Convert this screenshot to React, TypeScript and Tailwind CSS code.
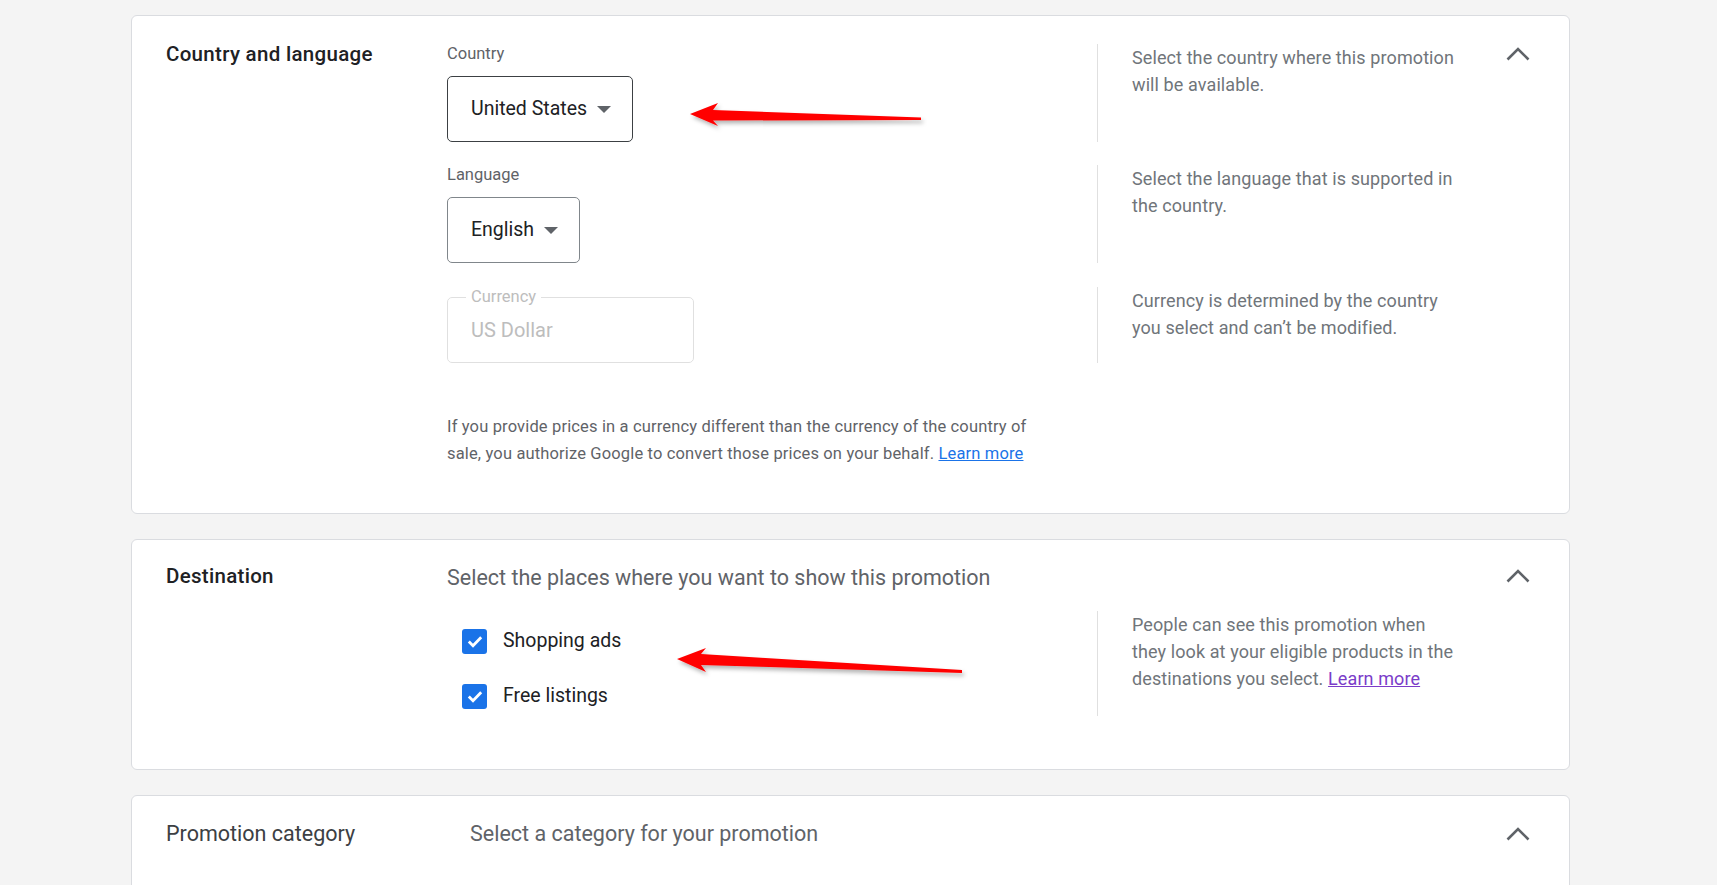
import React from 'react';

const font = { fontFamily: 'Roboto, "Liberation Sans", Arial, sans-serif' };

const ChevronUp = () => (
  <div className="h-[20px] flex items-center">
    <svg width="24" height="14" viewBox="0 0 24 14" fill="none">
      <path d="M1.5 12.5L12 2l10.5 10.5" stroke="#5f6368" strokeWidth="2.6" />
    </svg>
  </div>
);

const Caret = () => (
  <svg width="14" height="7" viewBox="0 0 14 7" className="shrink-0">
    <path d="M0 0h14L7 7z" fill="#5f6368" />
  </svg>
);

const Checkbox = ({ label }: { label: string }) => (
  <label className="flex items-center h-[40px] gap-[16px] cursor-pointer">
    <span className="w-[25px] h-[25px] rounded-[3px] bg-[#1a73e8] flex items-center justify-center">
      <svg width="16" height="13" viewBox="0 0 16 13" fill="none">
        <path d="M1.8 6.6l4.2 4.2L14.2 2.2" stroke="#fff" strokeWidth="2.8" />
      </svg>
    </span>
    <span className="text-[19.5px] text-[#202124]">{label}</span>
  </label>
);

const Help = ({ children }: { children: React.ReactNode }) => (
  <div className="border-l border-[#e0e0e0] pl-[34px] pb-[3px]">
    <p className="w-[330px] text-[18px] leading-[27px] tracking-[0.1px] text-[#70757a]">{children}</p>
  </div>
);

const Select = ({ value, dark }: { value: string; dark?: boolean }) => (
  <button
    className={`h-[66px] inline-flex items-center gap-[10px] pl-[23px] pr-[21px] rounded-[5px] bg-white ${
      dark ? 'border-[1.5px] border-[#3c4043]' : 'border border-[#80868b]'
    }`}
  >
    <span className="text-[19.5px] text-[#202124]">{value}</span>
    <Caret />
  </button>
);

const Arrows = () => (
  <svg
    width="1717"
    height="885"
    className="absolute left-0 top-0 pointer-events-none"
    viewBox="0 0 1717 885"
  >
    <defs>
      <filter id="shadow" x="-10%" y="-50%" width="120%" height="200%">
        <feDropShadow dx="2" dy="3" stdDeviation="2" floodColor="#000" floodOpacity="0.3" />
      </filter>
    </defs>
    <polygon
      points="690,114 718,103 713,110 921,117.5 921,120 713,120.5 718,126"
      fill="#ff0000"
      filter="url(#shadow)"
    />
    <polygon
      points="677,659 706,648 701,654 962,670 962,673 701,665 706,672"
      fill="#ff0000"
      filter="url(#shadow)"
    />
  </svg>
);

const headingCls = 'w-[281px] shrink-0 text-[20.5px] leading-[20px] font-medium tracking-[0.3px] text-[#202124]';

export default function App() {
  return (
    <div className="relative w-full h-[885px] overflow-hidden bg-[#f4f4f4]" style={font}>
      <div className="ml-[131px] w-[1439px] pt-[15px] flex flex-col gap-[25px]">
        {/* Country and language */}
        <section className="bg-white border border-[#dadce0] rounded-[6px] flex pl-[34px] pr-[39px] pt-[28px] pb-[46px]">
          <h2 className={headingCls}>Country and language</h2>
          <div className="flex-1 flex flex-col">
            <div className="flex">
              <div className="w-[650px] shrink-0 flex flex-col items-start">
                <span className="text-[16.5px] leading-[20px] text-[#5f6368]">Country</span>
                <div className="mt-[12px]">
                  <Select value="United States" dark />
                </div>
              </div>
              <Help>Select the country where this promotion will be available.</Help>
            </div>

            <div className="flex mt-[23px]">
              <div className="w-[650px] shrink-0 flex flex-col items-start">
                <span className="text-[16.5px] leading-[20px] text-[#5f6368]">Language</span>
                <div className="mt-[12px]">
                  <Select value="English" />
                </div>
              </div>
              <Help>Select the language that is supported in the country.</Help>
            </div>

            <div className="flex mt-[24px]">
              <div className="w-[650px] shrink-0">
                <fieldset className="w-[247px] h-[76px] border border-[#e0e0e0] rounded-[5px] pl-[18px] pr-4">
                  <legend className="px-[5px] text-[16.5px] leading-[20px] text-[#bdbdbd]">Currency</legend>
                  <div className="pl-[5px] pt-[12px] text-[20px] leading-[22px] text-[#bdbdbd]">US Dollar</div>
                </fieldset>
              </div>
              <Help>Currency is determined by the country you select and can’t be modified.</Help>
            </div>

            <p className="mt-[50px] w-[610px] text-[16.5px] leading-[27px] tracking-[0.15px] text-[#5f6368]">
              If you provide prices in a currency different than the currency of the country of sale, you
              authorize Google to convert those prices on your behalf.{' '}
              <a href="#" className="text-[#1a73e8] underline">
                Learn more
              </a>
            </p>
          </div>
          <ChevronUp />
        </section>

        {/* Destination */}
        <section className="bg-white border border-[#dadce0] rounded-[6px] flex pl-[34px] pr-[39px] pt-[26px] pb-[53px]">
          <h2 className={headingCls}>Destination</h2>
          <div className="flex-1 flex flex-col">
            <p className="text-[21.5px] leading-[24px] text-[#5f6368]">
              Select the places where you want to show this promotion
            </p>
            <div className="flex mt-[21px]">
              <div className="w-[650px] shrink-0 pl-[15px] pt-[10px] flex flex-col gap-[15px]">
                <Checkbox label="Shopping ads" />
                <Checkbox label="Free listings" />
              </div>
              <Help>
                People can see this promotion when they look at your eligible products in the destinations you
                select.{' '}
                <a href="#" className="text-[#7b3cc9] underline">
                  Learn more
                </a>
              </Help>
            </div>
          </div>
          <ChevronUp />
        </section>

        {/* Promotion category */}
        <section className="bg-white border border-[#dadce0] rounded-[6px] flex pl-[34px] pr-[39px] pt-[28px] pb-[60px]">
          <h2 className="w-[281px] shrink-0 text-[21.5px] leading-[20px] text-[#3c4043]">Promotion category</h2>
          <div className="flex-1 pl-[23px]">
            <p className="text-[21.5px] leading-[20px] text-[#5f6368]">Select a category for your promotion</p>
          </div>
          <ChevronUp />
        </section>
      </div>
      <Arrows />
    </div>
  );
}
